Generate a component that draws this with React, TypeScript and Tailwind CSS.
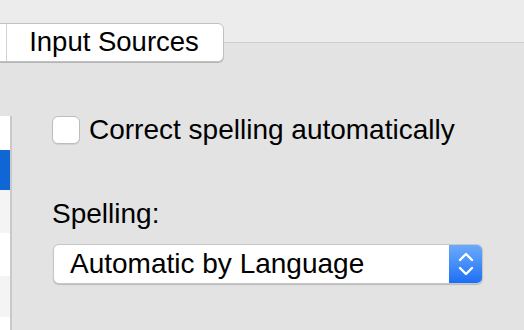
import React from "react";

export default function App() {
  const font = { fontFamily: '"Liberation Sans", Arial, sans-serif' };
  return (
    <div className="relative w-[524px] h-[330px] overflow-hidden bg-[#e3e3e3] text-[#111]" style={font}>
      {/* top band */}
      <div className="h-[43px] bg-[#ececec] border-b border-[#cdcdcd]" />
      {/* tab segment overlapping the box edge */}
      <div className="absolute left-[-8px] top-[23px] h-[39px] w-[232px] flex bg-white rounded-[6px] border border-[#c2c2c2] shadow-[0_1px_0_#b4b4b4]">
        <div className="w-[14px] border-r border-[#d2d2d2]" />
        <div className="flex-1 flex items-center justify-center text-[27.5px] leading-none pb-[1px] pr-[2px] text-black">
          Input Sources
        </div>
      </div>
      <div className="flex">
        {/* left list */}
        <div className="mt-[73px] w-[12px] h-[220px] border-r-2 border-[#c9c9c9] flex flex-col">
          <div className="h-[34px] bg-white" />
          <div className="h-[40px] bg-[#1166d6]" />
          <div className="h-[43px] bg-[#f4f4f4]" />
          <div className="h-[43px] bg-white" />
          <div className="h-[41px] bg-[#f4f4f4]" />
          <div className="flex-1 bg-white" />
        </div>
        {/* content */}
        <div className="flex-1 pl-[40px] pt-[73px]">
          <div className="flex items-center h-[28px]">
            <div className="w-[28px] h-[28px] rounded-[6px] bg-white border border-[#bdbdbd] shadow-[0_1px_0_rgba(0,0,0,0.08)]" />
            <span className="ml-[9px] text-[28px] leading-none text-black">Correct spelling automatically</span>
          </div>
          <div className="mt-[56px] text-[28px] leading-none text-black">Spelling:</div>
          <div className="mt-[16px] ml-[1px] w-[430px] h-[40px] flex rounded-[6px] bg-white border border-[#c6c6c6] shadow-[0_1px_1px_rgba(0,0,0,0.18)] overflow-hidden">
            <div className="flex-1 flex items-center pl-[16px] text-[28px] leading-none text-black pb-[1px]">
              Automatic by Language
            </div>
            <div className="w-[33px] h-full flex items-center justify-center bg-gradient-to-b from-[#6aaaf9] to-[#1b6ff5]">
              <svg width="18" height="28" viewBox="0 0 18 28" fill="none" stroke="white" strokeWidth="2.4" strokeLinecap="round" strokeLinejoin="round">
                <path d="M3 10 L9 4 L15 10" />
                <path d="M3 18 L9 24 L15 18" />
              </svg>
            </div>
          </div>
        </div>
      </div>
    </div>
  );
}
